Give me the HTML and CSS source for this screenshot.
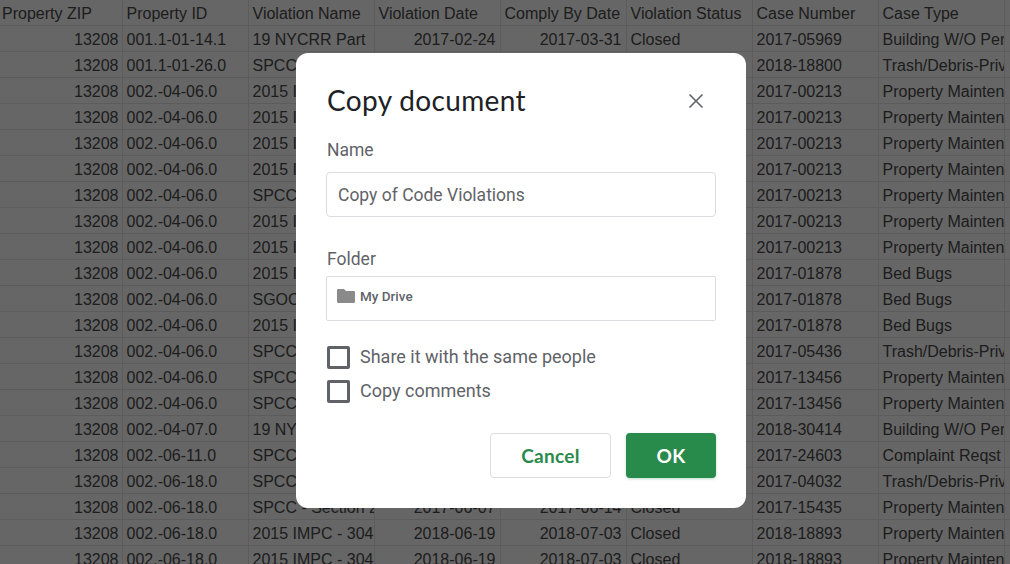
FILE: index.html
```html
<!DOCTYPE html>
<html lang="en">
<head>
<meta charset="utf-8">
<title>Copy document</title>
<link rel="stylesheet" href="styles.css">
</head>
<body>
<table class="sheet">
<colgroup><col class="c1"><col class="c2"><col class="c3"><col class="c4"><col class="c5"><col class="c6"><col class="c7"><col class="c8"><col></colgroup>
<thead>
<tr><th>Property ZIP</th><th>Property ID</th><th>Violation Name</th><th>Violation Date</th><th>Comply By Date</th><th>Violation Status</th><th>Case Number</th><th>Case Type</th><th></th></tr>
</thead>
<tbody>
<tr><td class="n">13208</td><td>001.1-01-14.1</td><td>19 NYCRR Part</td><td class="n d">2017-02-24</td><td class="n d">2017-03-31</td><td>Closed</td><td>2017-05969</td><td>Building W/O Permit</td><td></td></tr>
<tr><td class="n">13208</td><td>001.1-01-26.0</td><td>SPCC - Section 27</td><td class="n d">2018-05-31</td><td class="n d">2018-06-07</td><td>Closed</td><td>2018-18800</td><td>Trash/Debris-Private</td><td></td></tr>
<tr><td class="n">13208</td><td>002.-04-06.0</td><td>2015 IMPC - 304</td><td class="n d">2017-01-05</td><td class="n d">2017-02-05</td><td>Closed</td><td>2017-00213</td><td>Property Maintenance</td><td></td></tr>
<tr><td class="n">13208</td><td>002.-04-06.0</td><td>2015 IMPC - 304</td><td class="n d">2017-01-05</td><td class="n d">2017-02-05</td><td>Closed</td><td>2017-00213</td><td>Property Maintenance</td><td></td></tr>
<tr><td class="n">13208</td><td>002.-04-06.0</td><td>2015 IMPC - 304</td><td class="n d">2017-01-05</td><td class="n d">2017-02-05</td><td>Closed</td><td>2017-00213</td><td>Property Maintenance</td><td></td></tr>
<tr><td class="n">13208</td><td>002.-04-06.0</td><td>2015 IMPC - 304</td><td class="n d">2017-01-05</td><td class="n d">2017-02-05</td><td>Closed</td><td>2017-00213</td><td>Property Maintenance</td><td></td></tr>
<tr><td class="n">13208</td><td>002.-04-06.0</td><td>SPCC - Section 27</td><td class="n d">2017-01-05</td><td class="n d">2017-02-05</td><td>Closed</td><td>2017-00213</td><td>Property Maintenance</td><td></td></tr>
<tr><td class="n">13208</td><td>002.-04-06.0</td><td>2015 IMPC - 304</td><td class="n d">2017-01-05</td><td class="n d">2017-02-05</td><td>Closed</td><td>2017-00213</td><td>Property Maintenance</td><td></td></tr>
<tr><td class="n">13208</td><td>002.-04-06.0</td><td>2015 IMPC - 304</td><td class="n d">2017-01-05</td><td class="n d">2017-02-05</td><td>Closed</td><td>2017-00213</td><td>Property Maintenance</td><td></td></tr>
<tr><td class="n">13208</td><td>002.-04-06.0</td><td>2015 IMPC - 304</td><td class="n d">2017-01-20</td><td class="n d">2017-02-20</td><td>Closed</td><td>2017-01878</td><td>Bed Bugs</td><td></td></tr>
<tr><td class="n">13208</td><td>002.-04-06.0</td><td>SGOC - Section 1</td><td class="n d">2017-01-20</td><td class="n d">2017-02-20</td><td>Closed</td><td>2017-01878</td><td>Bed Bugs</td><td></td></tr>
<tr><td class="n">13208</td><td>002.-04-06.0</td><td>2015 IMPC - 309</td><td class="n d">2017-01-20</td><td class="n d">2017-02-20</td><td>Closed</td><td>2017-01878</td><td>Bed Bugs</td><td></td></tr>
<tr><td class="n">13208</td><td>002.-04-06.0</td><td>SPCC - Section 27</td><td class="n d">2017-02-24</td><td class="n d">2017-03-03</td><td>Closed</td><td>2017-05436</td><td>Trash/Debris-Private</td><td></td></tr>
<tr><td class="n">13208</td><td>002.-04-06.0</td><td>SPCC - Section 27</td><td class="n d">2017-04-11</td><td class="n d">2017-05-11</td><td>Closed</td><td>2017-13456</td><td>Property Maintenance</td><td></td></tr>
<tr><td class="n">13208</td><td>002.-04-06.0</td><td>SPCC - Section 27</td><td class="n d">2017-04-11</td><td class="n d">2017-05-11</td><td>Closed</td><td>2017-13456</td><td>Property Maintenance</td><td></td></tr>
<tr><td class="n">13208</td><td>002.-04-07.0</td><td>19 NYCRR Part</td><td class="n d">2018-09-10</td><td class="n d">2018-10-10</td><td>Closed</td><td>2018-30414</td><td>Building W/O Permit</td><td></td></tr>
<tr><td class="n">13208</td><td>002.-06-11.0</td><td>SPCC - Section 27</td><td class="n d">2017-07-20</td><td class="n d">2017-08-20</td><td>Closed</td><td>2017-24603</td><td>Complaint Reqst</td><td></td></tr>
<tr><td class="n">13208</td><td>002.-06-18.0</td><td>SPCC - Section 27</td><td class="n d">2017-01-20</td><td class="n d">2017-01-27</td><td>Closed</td><td>2017-04032</td><td>Trash/Debris-Private</td><td></td></tr>
<tr><td class="n">13208</td><td>002.-06-18.0</td><td>SPCC - Section 2</td><td class="n d">2017-06-07</td><td class="n d">2017-06-14</td><td>Closed</td><td>2017-15435</td><td>Property Maintenance</td><td></td></tr>
<tr><td class="n">13208</td><td>002.-06-18.0</td><td>2015 IMPC - 304</td><td class="n d">2018-06-19</td><td class="n d">2018-07-03</td><td>Closed</td><td>2018-18893</td><td>Property Maintenance</td><td></td></tr>
<tr><td class="n">13208</td><td>002.-06-18.0</td><td>2015 IMPC - 304</td><td class="n d">2018-06-19</td><td class="n d">2018-07-03</td><td>Closed</td><td>2018-18893</td><td>Property Maintenance</td><td></td></tr>
</tbody>
</table>
<div class="scrim"></div>
<section class="dialog">
  <header class="dialog-head">
    <h1 class="title">Copy document</h1>
    <svg class="close" viewBox="0 0 16 16" width="16" height="16"><path d="M1.500 1.500 14.500 14.500M14.500 1.500 1.500 14.500" fill="none" stroke="#5f6368" stroke-width="1.6"/></svg>
  </header>
  <div class="label label-name">Name</div>
  <div class="field field-name">Copy of Code Violations</div>
  <div class="label label-folder">Folder</div>
  <div class="field field-folder">
    <svg class="folder" viewBox="0 0 18 14" width="18" height="14"><path d="M0 1.200C0 .5.5 0 1.200 0H7l2 2h7.800c.7 0 1.200.5 1.200 1.200V12.800c0 .7-.5 1.200-1.200 1.200H1.200C.5 14 0 13.500 0 12.800Z" fill="#8a8a8a"/></svg>
    <span class="folder-name">My Drive</span>
  </div>
  <div class="check first"><span class="box"></span><span>Share it with the same people</span></div>
  <div class="check"><span class="box"></span><span>Copy comments</span></div>
  <div class="actions">
    <div class="btn cancel">Cancel</div>
    <div class="btn ok">OK</div>
  </div>
</section>
</body>
</html>
```
FILE: styles.css
```css
html, body {
  margin: 0;
  padding: 0;
  height: 100%;
  overflow: hidden;
  background: #fff;
}
.sheet {
  border-collapse: collapse;
  table-layout: fixed;
  width: 1047px;
  font: 16px/23px "Liberation Sans", Arial, sans-serif;
  color: #4a4a4a;
}
.c1 { width: 122px; }
.c2 { width: 126px; }
.c3 { width: 126px; }
.c4 { width: 126px; }
.c5 { width: 126px; }
.c6 { width: 126px; }
.c7 { width: 126px; }
.c8 { width: 126px; }
.sheet th, .sheet td {
  height: 23px;
  padding: 2px 3px 0 4px;
  border-right: 1px solid #e6e6e6;
  border-bottom: 1px solid #e6e6e6;
  font-weight: 400;
  text-align: left;
  white-space: nowrap;
  overflow: hidden;
  box-sizing: content-box;
}
.sheet th:first-child { padding-left: 2px; }
.sheet td.n { text-align: right; padding-right: 3px; }
.sheet td.d { padding-right: 4px; }
.scrim {
  position: fixed;
  inset: 0;
  background: rgba(0, 0, 0, .6);
}
.dialog {
  position: fixed;
  left: 296px;
  top: 53px;
  width: 450px;
  height: 455px;
  box-sizing: border-box;
  padding: 0 30px;
  background: #fff;
  border-radius: 12px;
  font: 18px/24px Roboto, sans-serif;
  color: #5f6368;
}
.dialog-head {
  display: flex;
  align-items: center;
  justify-content: space-between;
  padding: 29px 12px 20px 0;
}
.title {
  margin: 0 0 0 1px;
  font: 400 28px/36px Lato, sans-serif;
  letter-spacing: .35px;
  color: #202124;
}
.close { flex: none; margin-top: 2px; }
.label { padding-left: 1px; font-size: 17.5px; color: #5f6368; }
.field {
  box-sizing: border-box;
  width: 390px;
  height: 45px;
  border: 1px solid #dadce0;
  border-radius: 4px;
  padding: 0 11px;
  display: flex;
  align-items: center;
  font-size: 17.5px;
}
.field-name { margin-top: 10px; }
.label-folder { margin-top: 30px; }
.field-folder {
  margin-top: 5px;
  border-radius: 2px;
  padding: 0 0 6px 10px;
  gap: 5px;
}
.folder { flex: none; }
.folder-name { font-size: 13.5px; font-weight: 500; }
.check {
  display: flex;
  align-items: center;
  gap: 10px;
  height: 24px;
  margin-top: 10px;
  padding-left: 1px;
}
.check.first { margin-top: 24px; }
.box {
  box-sizing: border-box;
  width: 23px;
  height: 23px;
  border: 3px solid #5f6368;
  border-radius: 2px;
}
.actions {
  display: flex;
  justify-content: flex-end;
  gap: 15px;
  margin-top: 30px;
}
.btn {
  box-sizing: border-box;
  height: 45px;
  border-radius: 4px;
  display: flex;
  align-items: center;
  justify-content: center;
  font: 700 19px/24px Lato, sans-serif;
  letter-spacing: .3px;
}
.cancel {
  width: 121px;
  border: 1px solid #dadce0;
  color: #288a4b;
}
.ok {
  width: 90px;
  background: #288a4b;
  color: #fff;
  box-shadow: 0 1px 3px rgba(40, 138, 75, .3);
}
```
